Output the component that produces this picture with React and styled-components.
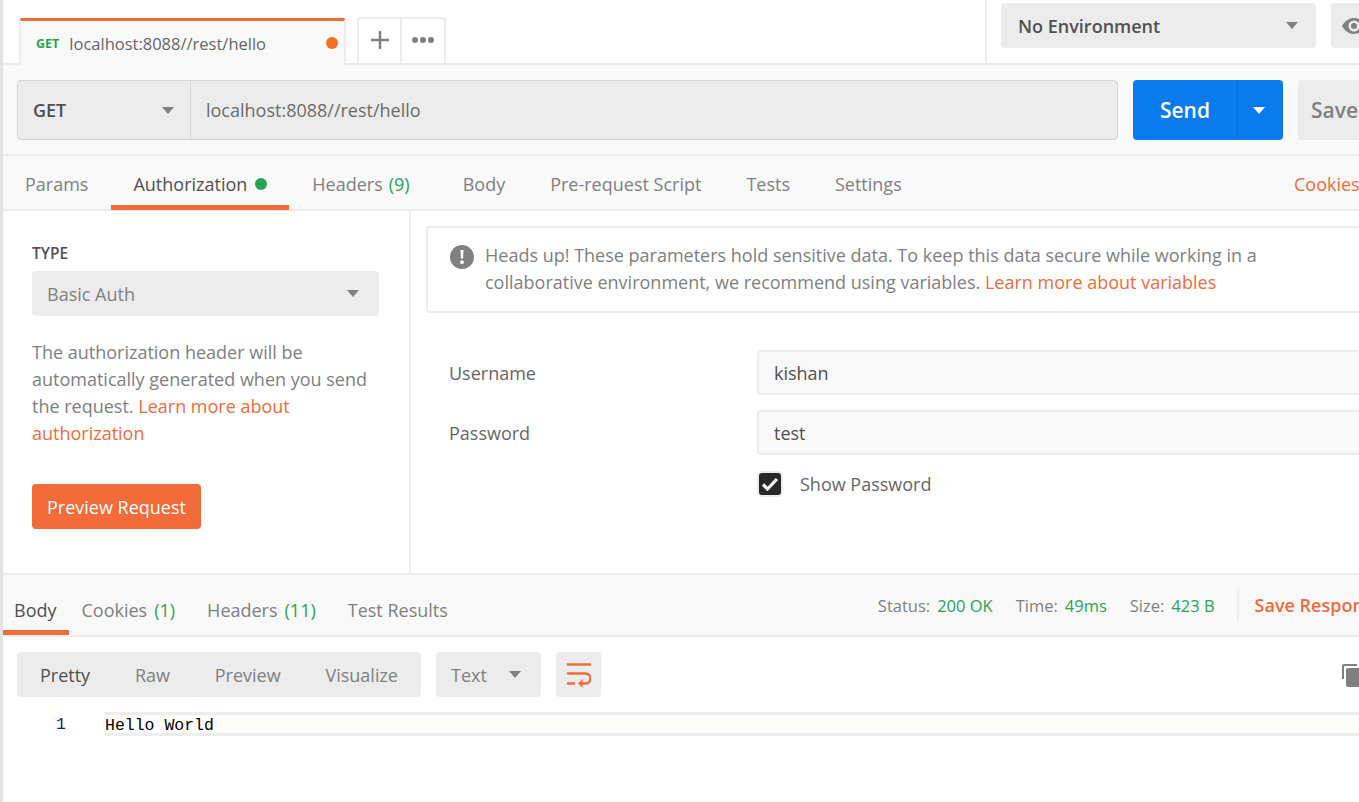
import React from 'react';
import styled, { createGlobalStyle } from 'styled-components';

const orange = '#f26b3a';
const green = '#26a553';

const Global = createGlobalStyle`
  html, body { margin: 0; padding: 0; background: #fff; }
  body { font-family: "Open Sans", "Liberation Sans", sans-serif; font-size: 18px; color: #808080; }
`;

const Page = styled.div`
  width: 1359px;
  height: 802px;
  overflow: hidden;
  box-sizing: border-box;
  border-left: 3px solid #e3e3e3;
`;

const TopBar = styled.div`
  height: 65px;
  box-sizing: border-box;
  border-bottom: 2px solid #ececec;
  display: flex;
  align-items: flex-end;
  width: 1500px;
  padding-left: 16px;
`;

const ReqTab = styled.div`
  width: 327px;
  height: 47px;
  box-sizing: border-box;
  margin-bottom: -2px;
  background: #f9f9f9;
  border: 2px solid #ececec;
  border-top: 3px solid ${orange};
  border-bottom: 0;
  border-radius: 3px 3px 0 0;
  display: flex;
  align-items: center;
  padding: 0 6px 0 15px;
`;

const MethodTag = styled.span`
  font-size: 12.5px;
  font-weight: 700;
  color: ${green};
  margin-right: 10px;
`;

const TabTitle = styled.span`
  font-size: 16.5px;
  color: #666;
  flex: 1;
`;

const Dot = styled.span`
  width: ${p => p.$size}px;
  height: ${p => p.$size}px;
  border-radius: 50%;
  background: ${p => p.$color};
  display: inline-block;
`;

const TabActions = styled.div`
  display: flex;
  height: 46px;
  margin-left: 11px;
  box-sizing: border-box;
  border: 2px solid #ececec;
  border-bottom: 0;
  border-radius: 3px 3px 0 0;
`;

const TabAction = styled.div`
  width: ${p => p.$w}px;
  display: flex;
  align-items: center;
  justify-content: center;
  padding-bottom: 3px;
  & + & { border-left: 2px solid #ececec; }
`;

const EnvArea = styled.div`
  margin-left: 539px;
  height: 63px;
  border-left: 2px solid #ececec;
  display: flex;
  padding: 3px 0 0 14px;
  box-sizing: border-box;
  gap: 15px;
`;

const EnvSelect = styled.div`
  width: 315px;
  height: 45px;
  box-sizing: border-box;
  background: #ececec;
  border-radius: 4px;
  padding: 0 18px 0 17px;
  display: flex;
  align-items: center;
  justify-content: space-between;
  color: #505050;
  font-weight: 600;
`;

const EyeButton = styled.div`
  width: 60px;
  height: 45px;
  background: #ececec;
  border-radius: 4px;
  display: flex;
  align-items: center;
  padding-left: 11px;
  box-sizing: border-box;
`;

const Caret = styled.span`
  width: 0;
  height: 0;
  display: inline-block;
  border-left: 6.5px solid transparent;
  border-right: 6.5px solid transparent;
  border-top: 7.5px solid ${p => p.$color || '#808080'};
`;

const RequestBar = styled.div`
  height: 91px;
  box-sizing: border-box;
  background: #f9f9f9;
  border-bottom: 2px solid #ececec;
  display: flex;
  padding: 15px 0 0 14px;
  width: 1500px;
`;

const UrlGroup = styled.div`
  width: 1101px;
  height: 60px;
  box-sizing: border-box;
  display: flex;
  background: #ececec;
  border: 1px solid #d4d4d4;
  border-radius: 4px;
`;

const MethodSelect = styled.div`
  width: 173px;
  box-sizing: border-box;
  border-right: 1px solid #d4d4d4;
  padding: 0 16px 0 15px;
  display: flex;
  align-items: center;
  justify-content: space-between;
  font-weight: 600;
  color: #505050;
`;

const UrlText = styled.div`
  padding-left: 15px;
  display: flex;
  align-items: center;
  color: #6b6b6b;
`;

const SendButton = styled.div`
  margin-left: 15px;
  width: 150px;
  height: 60px;
  display: flex;
  background: #097bed;
  border-radius: 4px;
  color: #fff;
  font-weight: 600;
  font-size: 21px;
`;

const SendLabel = styled.div`
  width: 104px;
  display: flex;
  align-items: center;
  justify-content: center;
  border-right: 1px solid #0a6fd6;
`;

const SendCaret = styled.div`
  flex: 1;
  display: flex;
  align-items: center;
  justify-content: center;
  padding-right: 3px;
`;

const SaveButton = styled.div`
  margin-left: 15px;
  width: 120px;
  height: 60px;
  background: #ececec;
  border-radius: 4px;
  color: #808080;
  font-weight: 600;
  font-size: 21px;
  display: flex;
  align-items: center;
  padding-left: 13px;
  box-sizing: border-box;
`;

const RequestTabs = styled.div`
  height: 55px;
  box-sizing: border-box;
  background: #f9f9f9;
  border-bottom: 2px solid #ececec;
  display: flex;
`;

const TabItem = styled.div`
  height: 54px;
  box-sizing: border-box;
  padding: 7px 22px 0;
  margin-left: ${p => p.$ml || 0}px;
  display: flex;
  align-items: center;
  gap: ${p => p.$gap || 6}px;
  color: ${p => (p.$active ? '#505050' : '#808080')};
  border-bottom: 5px solid ${p => (p.$active ? orange : 'transparent')};
  white-space: nowrap;
`;

const Count = styled.span`
  color: ${green};
`;

const CookiesLink = styled.div`
  margin-left: auto;
  color: ${orange};
  height: 54px;
  padding-top: 2px;
  box-sizing: border-box;
  display: flex;
  align-items: center;
  width: 65px;
  overflow: hidden;
`;

const AuthArea = styled.div`
  height: 364px;
  box-sizing: border-box;
  display: flex;
  border-bottom: 2px solid #ececec;
`;

const AuthSide = styled.div`
  width: 408px;
  flex: none;
  box-sizing: border-box;
  border-right: 2px solid #ececec;
  padding: 30px 30px 0 29px;
`;

const TypeLabel = styled.div`
  font-size: 15.5px;
  font-weight: 600;
  line-height: 24px;
  color: #505050;
`;

const TypeSelect = styled.div`
  margin-top: 6px;
  height: 45px;
  background: #ececec;
  border-radius: 4px;
  display: flex;
  align-items: center;
  justify-content: space-between;
  padding: 0 20px 0 15px;
`;

const Help = styled.div`
  margin-top: 23px;
  line-height: 27px;
`;

const Link = styled.span`
  color: ${orange};
`;

const PreviewButton = styled.div`
  margin-top: 37px;
  width: 169px;
  height: 45px;
  background: ${orange};
  color: #fff;
  border-radius: 4px;
  font-weight: 500;
  display: flex;
  align-items: center;
  justify-content: center;
`;

const AuthMain = styled.div`
  flex: 1;
  padding: 15px 0 0 15px;
  overflow: hidden;
`;

const Notice = styled.div`
  width: 1000px;
  height: 87px;
  box-sizing: border-box;
  border: 2px solid #ececec;
  border-radius: 4px;
  display: flex;
  gap: 11px;
  padding: 14px 0 0 22px;
  line-height: 27px;
`;

const NoticeIcon = styled.svg`
  width: 24px;
  height: 24px;
  flex: none;
  margin-top: 3px;
`;

const FieldRow = styled.div`
  display: flex;
  align-items: center;
  margin-top: ${p => p.$mt}px;
  padding-left: 23px;
`;

const FieldLabel = styled.div`
  width: 308px;
  flex: none;
  color: #666;
`;

const FieldValue = styled.div`
  width: 700px;
  flex: none;
  height: 45px;
  box-sizing: border-box;
  background: #f9f9f9;
  border: 2px solid #ececec;
  border-radius: 4px;
  display: flex;
  align-items: center;
  padding-left: 15px;
  color: #505050;
`;

const CheckRow = styled.div`
  margin-top: 16px;
  padding-left: 331px;
  display: flex;
  align-items: center;
  gap: 17px;
  color: #666;
`;

const CheckBox = styled.div`
  width: 26px;
  height: 26px;
  box-sizing: border-box;
  background: #282828;
  border: 2px solid #ececec;
  border-radius: 5px;
  display: flex;
  align-items: center;
  justify-content: center;
`;

const ResponseBar = styled.div`
  height: 62px;
  box-sizing: border-box;
  background: #f9f9f9;
  border-bottom: 2px solid #ececec;
  display: flex;
  width: 1500px;
`;

const ResponseTab = styled.div`
  height: 60px;
  box-sizing: border-box;
  padding: 15px ${p => p.$pr}px 0 ${p => p.$pl}px;
  display: flex;
  align-items: center;
  gap: 7px;
  white-space: nowrap;
  color: ${p => (p.$active ? '#505050' : '#808080')};
  border-bottom: 5px solid ${p => (p.$active ? orange : 'transparent')};
`;

const Stats = styled.div`
  margin-left: 430px;
  display: flex;
  align-items: center;
  font-size: 16.5px;
  height: 60px;
`;

const Stat = styled.span`
  margin-right: 23px;
  display: flex;
  gap: 7px;
`;

const StatValue = styled.span`
  color: ${green};
`;

const SaveResponse = styled.div`
  border-left: 2px solid #ececec;
  height: 30px;
  margin-left: -1px;
  padding-left: 16px;
  display: flex;
  align-items: center;
  color: ${orange};
  font-size: 18px;
  font-weight: 600;
  white-space: nowrap;
`;

const ResponseTools = styled.div`
  display: flex;
  align-items: center;
  gap: 15px;
  padding: 15px 0 0 14px;
`;

const ViewGroup = styled.div`
  width: 404px;
  height: 45px;
  box-sizing: border-box;
  background: #ececec;
  border-radius: 4px;
  display: flex;
  align-items: center;
  justify-content: space-between;
  padding: 0 23px;
`;

const ViewOption = styled.span`
  color: ${p => (p.$active ? '#505050' : '#808080')};
`;

const FormatSelect = styled.div`
  width: 105px;
  height: 45px;
  box-sizing: border-box;
  background: #ececec;
  border-radius: 4px;
  display: flex;
  align-items: center;
  justify-content: space-between;
  padding: 0 20px 0 15px;
`;

const WrapButton = styled.div`
  width: 45px;
  height: 45px;
  background: #ececec;
  border-radius: 4px;
  display: flex;
  align-items: center;
  justify-content: center;
`;

const CopyIcon = styled.svg`
  margin-left: auto;
  width: 24px;
  height: 24px;
  margin-right: -6px;
`;

const Editor = styled.div`
  margin-top: 15px;
  display: flex;
  font-family: "Liberation Mono", monospace;
  font-size: 16.5px;
  height: 24px;
`;

const Gutter = styled.div`
  width: 102px;
  box-sizing: border-box;
  padding: 0 39px 0 0;
  text-align: right;
  color: #1a1a6e;
  line-height: 26px;
`;

const CodeLine = styled.div`
  flex: 1;
  box-sizing: border-box;
  background: #fffefc;
  border-top: 3px solid #eee;
  border-bottom: 3px solid #eee;
  line-height: 21px;
  color: #000;
`;

export default function App() {
  return (
    <Page>
      <Global />
      <TopBar>
        <ReqTab>
          <MethodTag>GET</MethodTag>
          <TabTitle>localhost:8088//rest/hello</TabTitle>
          <Dot $size={12} $color="#f47023" />
        </ReqTab>
        <TabActions>
          <TabAction $w={41}>
            <svg width="18" height="18" viewBox="0 0 18 18"><path d="M9 0v18M0 9h18" stroke="#808080" strokeWidth="2.6" /></svg>
          </TabAction>
          <TabAction $w={42}>
            <svg width="24" height="8" viewBox="0 0 24 8" fill="#808080"><circle cx="4" cy="4" r="3" /><circle cx="12" cy="4" r="3" /><circle cx="20" cy="4" r="3" /></svg>
          </TabAction>
        </TabActions>
        <EnvArea>
          <EnvSelect>No Environment<Caret /></EnvSelect>
          <EyeButton>
            <svg width="24" height="16" viewBox="0 0 24 16"><path d="M12 0C7 0 2.700 3.200 0 8c2.700 4.800 7 8 12 8s9.300-3.200 12-8c-2.700-4.800-7-8-12-8zm0 13.500a5.500 5.500 0 1 1 0-11 5.500 5.500 0 0 1 0 11z" fill="#808080" /><circle cx="12" cy="8" r="3" fill="#808080" /></svg>
          </EyeButton>
        </EnvArea>
      </TopBar>

      <RequestBar>
        <UrlGroup>
          <MethodSelect>GET<Caret /></MethodSelect>
          <UrlText>localhost:8088//rest/hello</UrlText>
        </UrlGroup>
        <SendButton>
          <SendLabel>Send</SendLabel>
          <SendCaret><Caret $color="#fff" /></SendCaret>
        </SendButton>
        <SaveButton>Save</SaveButton>
      </RequestBar>

      <RequestTabs>
        <TabItem>Params</TabItem>
        <TabItem $active $gap={8} $ml={1}>Authorization<Dot $size={12} $color={green} /></TabItem>
        <TabItem $ml={1}>Headers<Count>(9)</Count></TabItem>
        <TabItem $ml={9}>Body</TabItem>
        <TabItem $ml={1}>Pre-request Script</TabItem>
        <TabItem $ml={1}>Tests</TabItem>
        <TabItem $ml={1}>Settings</TabItem>
        <CookiesLink>Cookies</CookiesLink>
      </RequestTabs>

      <AuthArea>
        <AuthSide>
          <TypeLabel>TYPE</TypeLabel>
          <TypeSelect>Basic Auth<Caret /></TypeSelect>
          <Help>
            The authorization header will be automatically generated when you send the request.{' '}
            <Link>Learn more about authorization</Link>
          </Help>
          <PreviewButton>Preview Request</PreviewButton>
        </AuthSide>
        <AuthMain>
          <Notice>
            <NoticeIcon viewBox="0 0 24 24">
              <circle cx="12" cy="12" r="12" fill="#808080" />
              <path d="M10.400 5h3.200l-.5 8.500h-2.200zM12 15.300a1.900 1.900 0 1 1 0 3.800 1.900 1.900 0 0 1 0-3.800z" fill="#fff" />
            </NoticeIcon>
            <div>
              Heads up! These parameters hold sensitive data. To keep this data secure while working in a<br />
              collaborative environment, we recommend using variables. <Link>Learn more about variables</Link>
            </div>
          </Notice>
          <FieldRow $mt={37}>
            <FieldLabel>Username</FieldLabel>
            <FieldValue>kishan</FieldValue>
          </FieldRow>
          <FieldRow $mt={15}>
            <FieldLabel>Password</FieldLabel>
            <FieldValue>test</FieldValue>
          </FieldRow>
          <CheckRow>
            <CheckBox>
              <svg width="18" height="14" viewBox="0 0 18 14"><path d="M2 7.500l4.500 4.500L16 2" fill="none" stroke="#fff" strokeWidth="3.200" /></svg>
            </CheckBox>
            Show Password
          </CheckRow>
        </AuthMain>
      </AuthArea>

      <ResponseBar>
        <ResponseTab $active $pl={11} $pr={12}>Body</ResponseTab>
        <ResponseTab $pl={13} $pr={15}>Cookies<Count>(1)</Count></ResponseTab>
        <ResponseTab $pl={17} $pr={15}>Headers<Count>(11)</Count></ResponseTab>
        <ResponseTab $pl={17} $pr={0}>Test Results</ResponseTab>
        <Stats>
          <Stat>Status:<StatValue>200 OK</StatValue></Stat>
          <Stat>Time:<StatValue>49ms</StatValue></Stat>
          <Stat>Size:<StatValue>423 B</StatValue></Stat>
          <SaveResponse>Save Response</SaveResponse>
        </Stats>
      </ResponseBar>

      <ResponseTools>
        <ViewGroup>
          <ViewOption $active>Pretty</ViewOption>
          <ViewOption>Raw</ViewOption>
          <ViewOption>Preview</ViewOption>
          <ViewOption>Visualize</ViewOption>
        </ViewGroup>
        <FormatSelect>Text<Caret /></FormatSelect>
        <WrapButton>
          <svg width="24" height="26" viewBox="0 0 24 26" fill="none" stroke={orange} strokeWidth="2.600">
            <path d="M0 2.500h24M0 11.500h18.500a5 5 0 0 1 0 10H14M0 21.500h8" />
            <path d="M11 21.500l4.500-4.500v9z" fill={orange} stroke="none" />
          </svg>
        </WrapButton>
        <CopyIcon viewBox="0 0 24 24">
          <path d="M1 16V3a2 2 0 0 1 2-2h13v2H3v13z" fill="#808080" />
          <rect x="5" y="5" width="19" height="19" rx="2" fill="#808080" />
        </CopyIcon>
      </ResponseTools>

      <Editor>
        <Gutter>1</Gutter>
        <CodeLine>Hello World</CodeLine>
      </Editor>
    </Page>
  );
}
